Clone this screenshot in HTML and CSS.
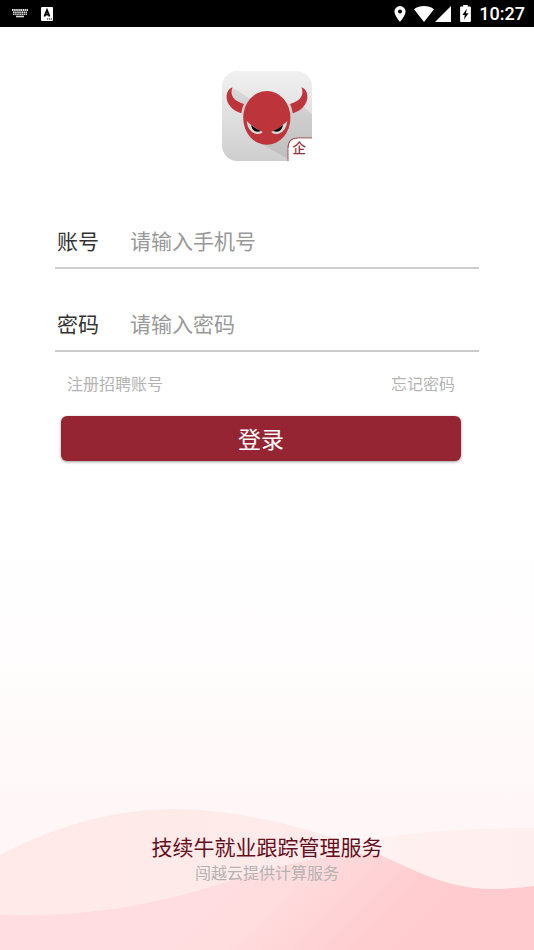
FILE: index.html
```html
<!DOCTYPE html>
<html lang="zh-CN">
<head>
    <meta charset="UTF-8">
    <meta name="viewport" content="width=device-width, initial-scale=1.0">
    <title>登录</title>
    <link rel="stylesheet" href="styles.css">
</head>
<body>

    <!-- 状态栏 -->
    <header class="status-bar">
        <div class="status-left">
            <svg width="16" height="9" viewBox="0 0 16 9" aria-hidden="true">
                <path d="M0 1h16M1 3.5h14" stroke="#ddd" stroke-width="2" stroke-dasharray="1.6 .5"/>
                <path d="M1 5.5h14" stroke="#ccc" stroke-width="1" stroke-dasharray="1.6 .5"/>
                <path d="M4 7.5h8" stroke="#ddd" stroke-width="1.6"/>
            </svg>
            <svg width="12" height="14" viewBox="0 0 12 14" aria-hidden="true">
                <rect width="12" height="14" rx="1" fill="#fff"/>
                <path d="M3.4 9.5L6 3.2l2.6 6.3M4.4 7.6h3.2" fill="none" stroke="#000" stroke-width="1.8"/>
                <path d="M6 12h5" stroke="#000" stroke-width="1.2" stroke-dasharray="1.2 .7"/>
            </svg>
        </div>
        <div class="status-right">
            <svg width="12" height="16" viewBox="0 0 12 16" aria-hidden="true">
                <path fill="#fff" fill-rule="evenodd" d="M6 0a5.6 5.6 0 0 0-5.6 5.6C.4 9.7 6 16 6 16s5.6-6.3 5.6-10.4A5.6 5.6 0 0 0 6 0zm0 3.6a2 2 0 1 1 0 4 2 2 0 0 1 0-4z"/>
            </svg>
            <svg class="wifi" width="20" height="16" viewBox="0 0 20 16" aria-hidden="true">
                <path fill="#fff" d="M0 3.2C5.5-1 14.5-1 20 3.2L10 16z"/>
            </svg>
            <svg class="signal" width="16" height="16" viewBox="0 0 16 16" aria-hidden="true">
                <path fill="#fff" d="M16 0v16H0z"/>
            </svg>
            <svg class="battery" width="11" height="17" viewBox="0 0 11 17" aria-hidden="true">
                <path fill="#fff" d="M3.2 0h4.6v1.6H10a.9.9 0 0 1 .9.9v13.6a.9.9 0 0 1-.9.9H1a.9.9 0 0 1-.9-.9V2.5a.9.9 0 0 1 .9-.9h2.2z"/>
                <path fill="#000" d="M6.8 3.8L2.4 9.9h2.4l-.8 4.7 4.6-6.3H6z"/>
            </svg>
            <span class="time">10:27</span>
        </div>
    </header>

    <main class="page">
        <!-- 底部波浪背景 -->
        <svg class="waves" viewBox="0 0 534 150" preserveAspectRatio="none" aria-hidden="true">
            <defs>
                <linearGradient id="left" x1="0" y1="0" x2="1" y2="0">
                    <stop offset="0" stop-color="#ffe9e9"/>
                    <stop offset="1" stop-color="#ffecec"/>
                </linearGradient>
                <linearGradient id="right" x1="0" y1="0" x2="1" y2="0">
                    <stop offset="0" stop-color="#fff6f5"/>
                    <stop offset=".4" stop-color="#fff0f0"/>
                    <stop offset="1" stop-color="#ffeeee"/>
                </linearGradient>
                <linearGradient id="front" gradientUnits="userSpaceOnUse" x1="250" y1="30" x2="390" y2="170">
                    <stop offset="0" stop-color="#ffdde0"/>
                    <stop offset=".3" stop-color="#ffdddf"/>
                    <stop offset=".8" stop-color="#ffcdd0"/>
                    <stop offset="1" stop-color="#ffcbcf"/>
                </linearGradient>
            </defs>
            <path fill="url(#right)" d="M320 50C390 32 460 28 534 28V150H320z"/>
            <path fill="url(#left)" d="M0 55C60 24 115 9 178 9C235 10 290 24 334 38C400 60 430 89 493 89Q514 89 534 86V150H0z"/>
            <path fill="url(#front)" d="M0 115C150 119 215 80 300 62Q340 53 378 54C420 73 450 89 493 89Q514 89 534 86V150H0z"/>
        </svg>

        <!-- 应用图标 -->
        <svg class="logo" viewBox="32 27 267 267" role="img" aria-label="技续牛">
            <defs>
                <linearGradient id="tile" x1="0" y1="0" x2="0" y2="1">
                    <stop offset="0" stop-color="#f1f1f1"/>
                    <stop offset="1" stop-color="#cecece"/>
                </linearGradient>
                <linearGradient id="shade" x1="0" y1="0" x2="0" y2="1">
                    <stop offset="0" stop-color="#d8d8d8"/>
                    <stop offset="1" stop-color="#bebebe"/>
                </linearGradient>
                <clipPath id="tileClip">
                    <rect x="32" y="27" width="267" height="267" rx="46"/>
                </clipPath>
            </defs>
            <g clip-path="url(#tileClip)">
                <rect x="32" y="27" width="267" height="267" fill="url(#tile)"/>
                <path fill="url(#shade)" d="M62 76L130 118L200 110L240 130L276 135L299 155V294H238L122 228L90 152L60 120z"/>
            </g>
            <path fill="#bd343a" d="M63 75C42 83 40 113 57 132Q68 146 89 152Q91 138 97 125C68 116 54 100 63 75z"/>
            <path fill="#bd343a" d="M268 75C289 83 291 113 274 132Q263 146 242 152Q240 138 234 125C263 116 277 100 268 75z"/>
            <ellipse cx="165" cy="166" rx="70" ry="80" fill="#bd343a"/>
            <path fill="#d9d9d9" d="M105 175Q128 197 153 208Q147 216 131 213Q109 206 105 175z"/>
            <path fill="#d9d9d9" d="M226 175Q203 197 178 208Q184 216 200 213Q222 206 226 175z"/>
            <path fill="#000" d="M118 187Q132 198 147 205Q139 209 130 206Q121 201 118 187z"/>
            <path fill="#000" d="M213 187Q199 198 184 205Q192 209 201 206Q210 201 213 187z"/>
            <path fill="#fff" stroke="#a3444c" stroke-width="3" d="M301 226H258Q228 226 228 256V294"/>
            <path fill="#fff" d="M230 256Q230 228 258 228H301V296H230z"/>
            <text class="logo-badge" x="261" y="271" text-anchor="middle">企</text>
        </svg>

        <!-- 登录表单 -->
        <form class="login-form">
            <div class="field">
                <label for="account">账号</label>
                <input type="tel" id="account" name="account" placeholder="请输入手机号">
            </div>
            <div class="field">
                <label for="password">密码</label>
                <input type="password" id="password" name="password" placeholder="请输入密码">
            </div>
            <div class="links">
                <a href="#register">注册招聘账号</a>
                <a href="#forgot">忘记密码</a>
            </div>
            <button type="submit">登录</button>
        </form>

        <footer class="footer">
            <p class="footer-title">技续牛就业跟踪管理服务</p>
            <p class="footer-note">闯越云提供计算服务</p>
        </footer>
    </main>

</body>
</html>
```
FILE: styles.css
```css
* {
    margin: 0;
    padding: 0;
    box-sizing: border-box;
}

body {
    display: flex;
    flex-direction: column;
    min-height: 100vh;
    background-color: #fff;
    font-family: Roboto, "Noto Sans CJK SC", sans-serif;
}

/* 状态栏 */
.status-bar {
    display: flex;
    justify-content: space-between;
    align-items: center;
    height: 27px;
    padding: 0 9px 0 12px;
    background-color: #000;
    color: #fff;
}

.status-left,
.status-right {
    display: flex;
    align-items: center;
}

.status-left {
    gap: 13px;
}

.wifi {
    margin-left: 8px;
}

.signal {
    margin-left: 1px;
}

.battery {
    margin: 0 8px 0 9px;
}

.time {
    font-size: 18px;
    font-weight: 500;
    line-height: 26px;
}

/* 页面主体 */
.page {
    position: relative;
    flex: 1;
    display: flex;
    flex-direction: column;
    padding: 44px 55px 64px;
    background: linear-gradient(#fff 0%, #fff 55%, #fffdfd 68%, #fff7f7 85%, #fff6f5 100%);
}

.waves {
    position: absolute;
    left: 0;
    bottom: 0;
    width: 100%;
    height: 150px;
}

.logo {
    align-self: center;
    width: 90px;
    height: 90px;
}

.logo-badge {
    font-size: 40px;
    font-weight: 500;
    fill: #99323e;
}

/* 登录表单 */
.login-form {
    margin-top: 54px;
}

.field {
    display: flex;
    align-items: center;
    height: 54px;
    margin-bottom: 29px;
    padding: 2px 0 0 2px;
    border-bottom: 2px solid #ccc;
}

.field label {
    width: 73px;
    font-size: 21px;
    line-height: 30px;
    color: #333;
}

.field input {
    flex: 1;
    min-width: 0;
    height: 30px;
    border: none;
    outline: none;
    background: transparent;
    font-family: inherit;
    font-size: 21px;
    line-height: 30px;
    color: #333;
}

.field input::placeholder {
    color: #999;
    opacity: 1;
}

.links {
    display: flex;
    justify-content: space-between;
    margin-top: -9px;
    padding: 0 24px 0 12px;
    line-height: 26px;
}

.links a {
    font-size: 16px;
    color: #b3b3b3;
    text-decoration: none;
}

.login-form button {
    display: block;
    width: calc(100% - 24px);
    height: 45px;
    margin: 18px 18px 0 6px;
    padding-bottom: 2px;
    border: none;
    border-radius: 6px;
    background-color: #962533;
    box-shadow: 0 1px 3px rgba(0, 0, 0, 0.4);
    font-family: inherit;
    font-size: 23px;
    color: #fff;
    cursor: pointer;
}

/* 页脚 */
.footer {
    position: relative;
    margin-top: auto;
    text-align: center;
}

.footer-title {
    font-size: 21px;
    line-height: 28px;
    color: #650f1c;
}

.footer-note {
    font-size: 16px;
    line-height: 24px;
    color: #b5b2b2;
}
```
